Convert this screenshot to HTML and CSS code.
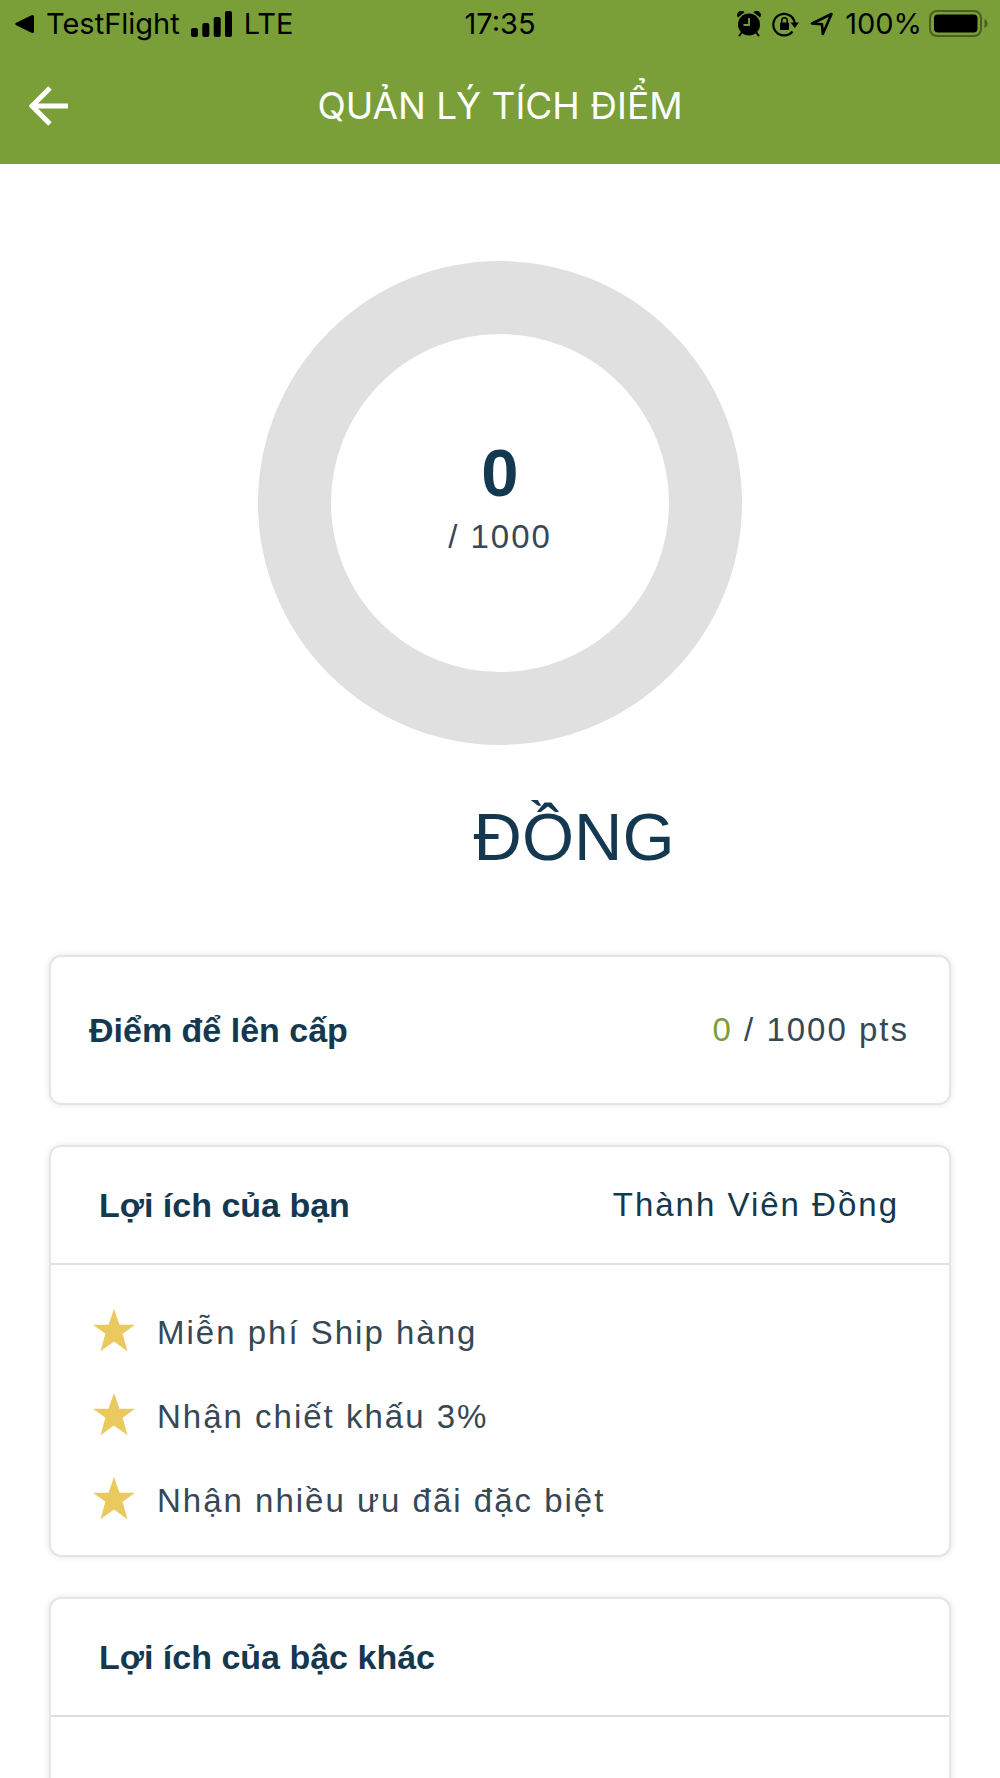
FILE: index.html
```html
<!DOCTYPE html>
<html lang="vi">
<head>
<meta charset="utf-8">
<meta name="viewport" content="width=device-width, initial-scale=1">
<title>Quản lý tích điểm</title>
<link rel="stylesheet" href="styles.css">
</head>
<body>
<svg class="sprite" aria-hidden="true">
  <symbol id="star" viewBox="0 0 42 48"><path d="M21 0 26.500 18H42L29.600 28 34.500 48 21 37 7.500 48 12.400 28 0 18h15.500z" transform="scale(1 .88)"/></symbol>
</svg>
<header class="header">
  <div class="status">
    <div class="status-left">
      <svg width="23" height="20" viewBox="-3 0 23 20" aria-hidden="true"><path d="M1.200 8.800 16.500 1.200Q19 .3 19 2.500v15Q19 19.700 16.500 18.800L1.200 11.200Q-.8 10 1.200 8.800z"/></svg>
      <span class="back-app">TestFlight</span>
      <svg width="42" height="26" viewBox="0 0 42 26" aria-hidden="true"><rect y="17" width="7" height="9" rx="2"/><rect x="11.300" y="12" width="7" height="14" rx="2"/><rect x="22.700" y="6" width="7" height="20" rx="2"/><rect x="34" width="7" height="26" rx="2"/></svg>
      <span>LTE</span>
    </div>
    <time>17:35</time>
    <div class="status-right">
      <svg width="24" height="26" viewBox="0 0 24 26" aria-hidden="true"><circle cx="12" cy="13.500" r="11"/><path d="M1 6.500A4.200 4.200 0 0 1 7.500 1.200zM23 6.500A4.200 4.200 0 0 0 16.500 1.200z"/><path d="m5 21-2.500 3.500M19 21l2.500 3.500" stroke="#000" stroke-width="2" stroke-linecap="round"/><path d="M12 7v7H6.500" fill="none" stroke="#7a9f38" stroke-width="1.800"/></svg>
      <svg width="27" height="26" viewBox="0 0 27 26" aria-hidden="true"><path d="M20.500 20.500A10.800 10.800 0 1 1 22.800 12" fill="none" stroke="#000" stroke-width="2.200"/><path d="M18.500 11.500H27L22.800 17z"/><rect x="8" y="11.500" width="9" height="7.500" rx="1"/><path d="M9.800 12V9.500a2.700 2.700 0 0 1 5.400 0V12" fill="none" stroke="#000" stroke-width="1.600"/></svg>
      <svg width="24" height="26" viewBox="0 0 24 26" aria-hidden="true"><path d="M21.500 3 2 12.500 12 13.200 12.800 23z" fill="none" stroke="#000" stroke-width="2.600" stroke-linejoin="round"/></svg>
      <span>100%</span>
      <svg width="59" height="28" viewBox="0 0 59 28" aria-hidden="true"><rect x="1" y="1" width="51" height="25" rx="7" fill="none" stroke="#000" stroke-opacity=".4" stroke-width="2"/><rect x="5" y="4.500" width="43.500" height="18" rx="4"/><path d="M55.500 9q3 1.500 3 4.500t-3 4.500z" opacity=".4"/></svg>
    </div>
  </div>
  <div class="navbar">
    <button class="back" type="button" aria-label="Quay lại"><svg width="40" height="40" viewBox="0 0 40 40" aria-hidden="true"><path d="M21 2 3 20l18 18M4 20h35" fill="none" stroke="#fff" stroke-width="5"/></svg></button>
    <h1 class="title">QUẢN LÝ TÍCH ĐIỂM</h1>
  </div>
</header>
<main class="content">
  <section class="ring">
    <strong class="ring-value">0</strong>
    <span class="body-text">/ 1000</span>
  </section>
  <p class="tier">ĐỒNG</p>

  <section class="card card-points">
    <h2 class="card-title">Điểm để lên cấp</h2>
    <span class="body-text"><span class="earned">0</span> / 1000 pts</span>
  </section>

  <section class="card">
    <div class="card-head">
      <h2 class="card-title">Lợi ích của bạn</h2>
      <span class="body-text member">Thành Viên Đồng</span>
    </div>
    <ul class="benefits">
      <li class="body-text"><svg class="star" aria-hidden="true"><use href="#star"/></svg>Miễn phí Ship hàng</li>
      <li class="body-text"><svg class="star" aria-hidden="true"><use href="#star"/></svg>Nhận chiết khấu 3%</li>
      <li class="body-text"><svg class="star" aria-hidden="true"><use href="#star"/></svg>Nhận nhiều ưu đãi đặc biệt</li>
    </ul>
  </section>

  <section class="card">
    <div class="card-head">
      <h2 class="card-title">Lợi ích của bậc khác</h2>
    </div>
    <p class="body-text level">Thành Viên Đồng</p>
  </section>
</main>
</body>
</html>
```
FILE: styles.css
```css
* {
  box-sizing: border-box;
}

body {
  margin: 0;
  height: 100vh;
  display: flex;
  flex-direction: column;
  overflow: hidden;
  background: #fff;
  color: #14384f;
  font-family: "Liberation Sans", Arial, sans-serif;
}

h1,
h2,
p,
ul {
  margin: 0;
  padding: 0;
}

svg {
  display: block;
  flex: none;
}

.sprite {
  position: absolute;
  width: 0;
  height: 0;
}

.header {
  flex: none;
  background: #7a9f38;
  font-family: Inter, "Noto Sans", sans-serif;
}

.status {
  display: grid;
  grid-template-columns: 1fr auto 1fr;
  align-items: center;
  height: 48px;
  padding: 0 12px;
  color: #000;
  font-size: 29px;
  line-height: 48px;
}

.status-left,
.status-right {
  display: flex;
  align-items: center;
  gap: 11px;
}

.status-right {
  justify-content: flex-end;
}

.status-right span {
  margin-right: -4px;
}

.navbar {
  display: grid;
  grid-template-columns: 40px 1fr 40px;
  align-items: center;
  height: 116px;
  padding: 0 29px;
}

.back {
  padding: 0;
  border: 0;
  background: none;
}

.title {
  color: #fff;
  font-size: 37px;
  font-weight: 400;
  line-height: 48px;
  text-align: center;
}

.content {
  flex: 1;
  min-height: 0;
  padding: 97px 49px 0;
  overflow-y: auto;
  scrollbar-width: none;
}

.ring {
  display: flex;
  flex-direction: column;
  align-items: center;
  justify-content: center;
  gap: 6px;
  width: 484px;
  height: 484px;
  margin: 0 auto;
  padding-bottom: 14px;
  border: 73px solid #e0e0e0;
  border-radius: 50%;
}

.ring-value {
  font-size: 67px;
  line-height: 76px;
}

.body-text {
  color: #364855;
  font-size: 33px;
  line-height: 40px;
  letter-spacing: 2px;
}

.tier {
  margin: 54px 0 80px;
  padding-left: 148px;
  font-size: 67px;
  line-height: 76px;
  text-align: center;
}

.card {
  margin-bottom: 40px;
  border: 2px solid #e1e6ed;
  border-radius: 12px;
  box-shadow: 0 0 6px rgba(0, 0, 0, 0.1);
}

.card-points,
.card-head {
  display: flex;
  align-items: center;
  justify-content: space-between;
}

.card-points {
  height: 150px;
  padding: 0 40px 0 38px;
}

.card-title {
  font-size: 34px;
  line-height: 40px;
}

.earned {
  color: #7a9f38;
}

.card-head {
  height: 118px;
  padding: 0 50px 0 48px;
  border-bottom: 2px solid #e0e0e0;
}

.member {
  color: #14384f;
}

.benefits {
  padding: 26px 42px 12px;
  list-style: none;
}

.benefits li {
  display: flex;
  align-items: center;
  gap: 22px;
  height: 84px;
}

.star {
  width: 42px;
  height: 48px;
  fill: #eac95f;
}

.level {
  padding: 57px 105px;
}
```
